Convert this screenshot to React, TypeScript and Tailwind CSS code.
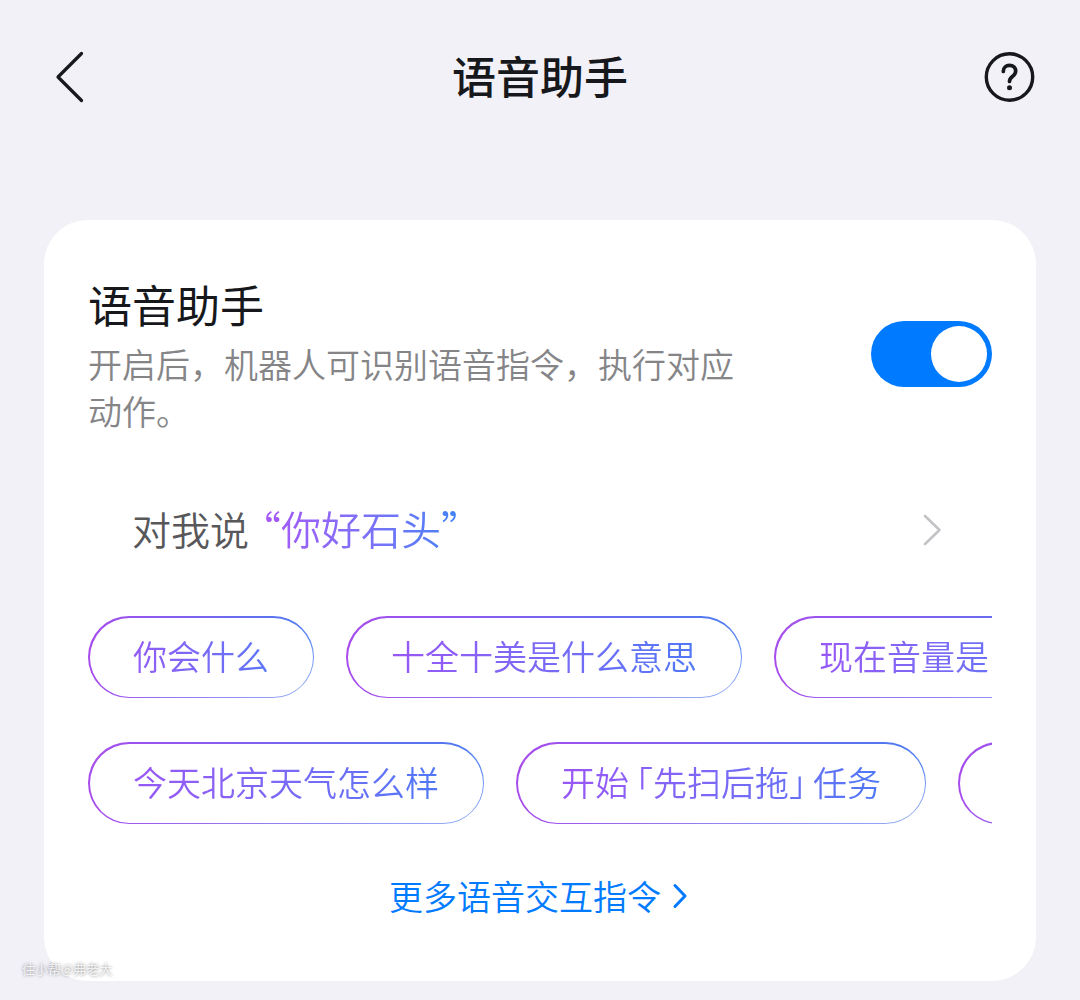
import { useState } from 'react'
import type { ReactNode } from 'react'

interface ChipProps {
  children: ReactNode
}

function CommandChip({ children }: ChipProps) {
  return (
    <button
      type="button"
      className="shrink-0 rounded-full bg-[linear-gradient(to_bottom_right,transparent_50%,rgba(255,255,255,0.4)),linear-gradient(to_right,#a84cec,#4a7cf0)] pt-[2px] pr-px pb-px pl-[2px]"
    >
      <span className="block rounded-full bg-white">
        <span className="block bg-linear-to-r from-[#a050f5] to-[#3b7cf6] bg-clip-text pt-[14px] pr-11 pb-[17px] pl-[43px] text-[34px] leading-[48px] font-[350] whitespace-nowrap text-transparent">
          {children}
        </span>
      </span>
    </button>
  )
}

function MopTaskLabel() {
  return (
    <>
      开始
      <span className="pl-[7px] [font-feature-settings:'halt']">「</span>
      先扫后拖
      <span className="pr-[7px] [font-feature-settings:'halt']">」</span>
      任务
    </>
  )
}

export default function App() {
  const [enabled, setEnabled] = useState(true)

  return (
    <div className="relative min-h-screen bg-[#f2f1f8] font-['Noto_Sans_CJK_SC',sans-serif] text-[#17181c]">
      <header className="flex h-[154px] items-center justify-between px-11">
        <button type="button" aria-label="返回" className="w-[54px]">
          <svg width="54" height="54" viewBox="0 0 54 54" fill="none">
            <path
              d="M37.5 3.5L14 27l23.5 23.5"
              stroke="currentColor"
              strokeWidth="3.2"
              strokeLinecap="round"
              strokeLinejoin="round"
            />
          </svg>
        </button>
        <h1 className="pb-1 text-[44px] leading-[64px] font-medium">语音助手</h1>
        <button type="button" aria-label="帮助" className="w-[54px]">
          <svg width="54" height="54" viewBox="0 0 54 54" fill="none">
            <circle cx="27.5" cy="27" r="23.2" stroke="currentColor" strokeWidth="3.4" />
            <path
              d="M21.3 21.4c0-3.7 2.6-6 6.2-6s6.2 2.3 6.2 5.7c0 2.6-1.3 3.9-3.1 5.3-2 1.6-3.1 2.4-3.1 5"
              stroke="currentColor"
              strokeWidth="3.7"
              strokeLinecap="round"
            />
            <circle cx="27.5" cy="37.7" r="2.5" fill="currentColor" />
          </svg>
        </button>
      </header>

      <main className="px-11 pt-[66px] pb-4">
        <section className="rounded-[44px] bg-white px-11 pt-[52px] pb-[61px]">
          <div className="flex items-center justify-between">
            <label htmlFor="voice" className="max-w-[660px] pb-[2px]">
              <span className="mb-1 block text-[44px] leading-[64px]">语音助手</span>
              <span className="block text-[34px] leading-[47px] font-[350] text-[#858588]">
                开启后，机器人可识别语音指令，执行对应动作。
              </span>
            </label>
            <input
              id="voice"
              type="checkbox"
              role="switch"
              checked={enabled}
              onChange={(e) => setEnabled(e.target.checked)}
              className="flex h-[66px] w-[121px] shrink-0 appearance-none items-center rounded-full bg-gray-300 px-[5px] before:size-14 before:rounded-full before:bg-white checked:justify-end checked:bg-[#007aff]"
            />
          </div>

          <button
            type="button"
            className="mt-[52px] flex h-[84px] w-full items-center justify-between px-11 text-left text-[39px] leading-[56px]"
          >
            <span className="flex items-baseline gap-3 pb-1 font-[350]">
              <span className="text-[#58585b]">对我说</span>
              <span className="bg-linear-to-r from-[#a855f7] to-[#3b82f6] bg-clip-text text-[40px] text-transparent [font-feature-settings:'halt']">
                “你好石头”
              </span>
            </span>
            <svg width="32" height="32" viewBox="0 0 32 32" fill="none">
              <path
                d="M9 2l14.5 14L9 30"
                stroke="#c4c4c8"
                strokeWidth="2.6"
                strokeLinecap="round"
                strokeLinejoin="round"
              />
            </svg>
          </button>

          <div className="mt-11 flex flex-col gap-11 overflow-hidden">
            <div className="flex gap-8">
              <CommandChip>你会什么</CommandChip>
              <CommandChip>十全十美是什么意思</CommandChip>
              <CommandChip>现在音量是多少</CommandChip>
            </div>
            <div className="flex gap-8">
              <CommandChip>今天北京天气怎么样</CommandChip>
              <CommandChip>
                <MopTaskLabel />
              </CommandChip>
              <CommandChip>暂停清扫</CommandChip>
            </div>
          </div>

          <a
            href="#commands"
            className="mt-12 flex items-center justify-center gap-2 text-[34px] leading-[48px] font-[350] text-[#007aff]"
          >
            更多语音交互指令
            <svg width="22" height="26" viewBox="0 0 22 26" fill="none">
              <path
                d="M6 2.5L16 13L6 23.5"
                stroke="currentColor"
                strokeWidth="3"
                strokeLinecap="round"
                strokeLinejoin="round"
              />
            </svg>
          </a>
        </section>
      </main>

      <p className="absolute bottom-5 left-[22px] text-[13px] leading-[22px] text-white/80 [text-shadow:0_0_3px_rgba(0,0,0,0.5)]">
        住小帮@弗老大
      </p>
    </div>
  )
}
